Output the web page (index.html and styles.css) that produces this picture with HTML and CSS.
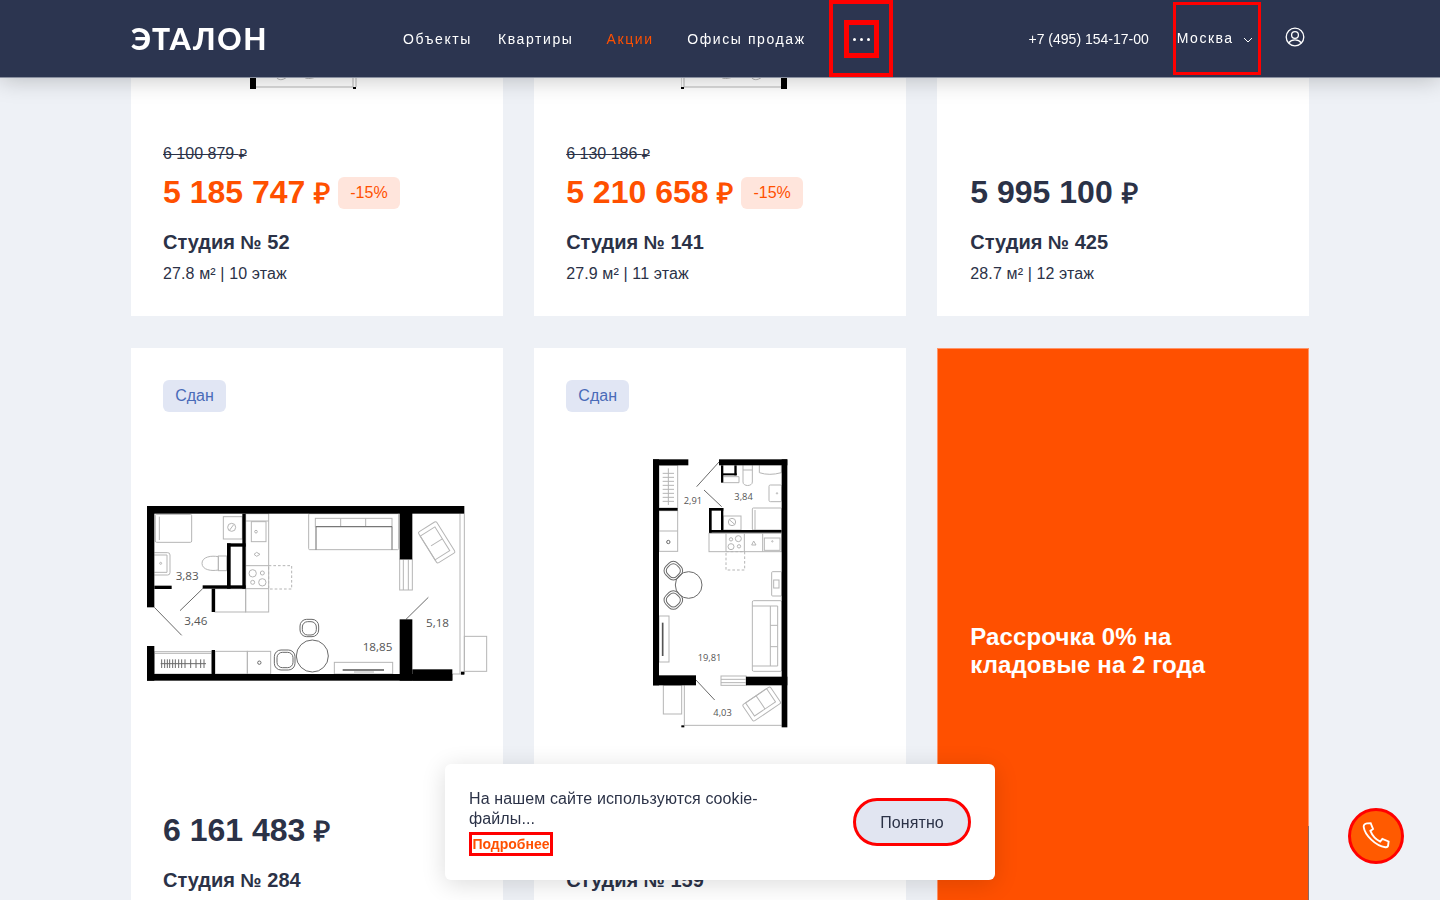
FILE: index.html
```html
<!DOCTYPE html>
<html lang="ru">
<head>
<meta charset="utf-8">
<title>Эталон</title>
<link rel="stylesheet" href="styles.css">
</head>
<body>
<header class="header">
  <div class="logo">ЭТАЛОН</div>
  <nav class="nav">
    <a class="nav-link">Объекты</a>
    <a class="nav-link">Квартиры</a>
    <a class="nav-link nav-accent">Акции</a>
    <a class="nav-link">Офисы продаж</a>
    <div class="more-outer"><div class="more-inner"><span class="dot"></span><span class="dot"></span><span class="dot"></span></div></div>
  </nav>
  <div class="header-right">
    <span class="phone">+7 (495) 154-17-00</span>
    <div class="city"><span class="city-name">Москва</span>
      <svg class="chev" viewBox="0 0 10 6"><path d="M1 1l4 4 4-4"/></svg>
    </div>
    <svg class="user" viewBox="0 0 20 20"><circle cx="10" cy="10" r="8.8"/><circle cx="10" cy="8" r="3.4"/><path d="M3.800 15.800c1.600-2.200 3.800-2.900 6.200-2.900s4.600.7 6.200 2.900"/></svg>
  </div>
</header>

<main class="grid">
  <article class="card card-top">
    <svg class="stub stub-a" viewBox="0 0 107 12">
      <rect class="w" x="0" y="0" width="6" height="12"/>
      <path class="f" d="M6 10h97M103 0v10M106 0v10"/>
      <path class="f" d="M26 0c2 3 6 4 11 0M54 0c2 2 6 2 12 0"/>
      <rect class="w" x="103" y="10" width="3" height="2"/>
    </svg>
    <div class="info">
      <div class="old">6 100 879 <span class="rub-old">₽</span></div>
      <div class="price-row"><span class="price price-sale">5 185 747 <span class="rub">₽</span></span><span class="badge">-15%</span></div>
      <h3 class="title">Студия <span class="num">№</span> 52</h3>
      <p class="meta">27.8 м² | 10 этаж</p>
    </div>
  </article>

  <article class="card card-top">
    <svg class="stub stub-b" viewBox="0 0 107 12">
      <rect class="w" x="100" y="0" width="6" height="12"/>
      <path class="f" d="M3 10h97M3 0v10M0 0v10"/>
      <path class="f" d="M70 0c2 3 6 4 11 0M40 0c2 2 6 2 12 0"/>
      <rect class="w" x="0" y="10" width="3" height="2"/>
    </svg>
    <div class="info">
      <div class="old">6 130 186 <span class="rub-old">₽</span></div>
      <div class="price-row"><span class="price price-sale">5 210 658 <span class="rub">₽</span></span><span class="badge">-15%</span></div>
      <h3 class="title">Студия <span class="num">№</span> 141</h3>
      <p class="meta">27.9 м² | 11 этаж</p>
    </div>
  </article>

  <article class="card card-top card-end">
    <div class="info">
      <div class="price-row"><span class="price">5 995 100 <span class="rub">₽</span></span></div>
      <h3 class="title">Студия <span class="num">№</span> 425</h3>
      <p class="meta">28.7 м² | 12 этаж</p>
    </div>
  </article>

  <article class="card card-bottom">
    <div class="tag">Сдан</div>
    <svg class="plan plan-a" viewBox="3 0 1110 630">
      <g class="f">
        <rect x="76" y="73" width="109" height="84" rx="4"/><path d="M88 80v70"/>
        <rect x="280" y="80" width="57" height="67"/><circle cx="305" cy="112" r="12"/><path d="M299 120l12-16"/>
        <path d="M73 188h40q7 0 7 7v53q0 7-7 7H73"/><path d="M73 195h38v52H73"/><circle cx="92" cy="220" r="3"/>
        <path d="M265 200c-20-4-49 0-49 20s29 24 49 20z"/><rect x="265" y="198" width="25" height="44"/>
        <rect x="347" y="71" width="69" height="295"/><path d="M347 93h69M347 227h69M347 296h69"/>
        <rect x="364" y="95" width="44" height="60"/><circle cx="378" cy="125" r="4"/><path d="M372 193l8-6 10 6-10 6z"/>
        <circle cx="368" cy="250" r="11"/><circle cx="397" cy="249" r="6"/><circle cx="368" cy="277" r="6"/><circle cx="397" cy="277" r="11"/>
        <rect class="dash" x="416" y="227" width="69" height="70"/>
        <rect x="255" y="296" width="92" height="70"/>
        <rect x="536" y="71" width="270" height="108" rx="3"/><rect x="556" y="85" width="230" height="25"/><path d="M632 85v25M707 85v25"/><path class="d" d="M558 110v69M786 110v69M558 110h228"/>
        <rect x="809" y="208" width="38" height="92"/><path d="M820 208v92M835 208v92"/>
        <g transform="translate(920 157) rotate(-32)"><rect x="-32" y="-55" width="64" height="110" rx="5"/><rect x="-32" y="-42" width="52" height="84"/><path d="M-20 0h40"/></g>
        <path d="M990 71v481M1003 71v481"/><rect x="1003" y="439" width="67" height="105"/><path d="M967 552h36"/>
        <circle class="d" cx="547" cy="498" r="48"/>
        <rect class="d" x="510" y="388" width="56" height="52" rx="20"/><rect class="d" x="517" y="395" width="42" height="40" rx="16"/>
        <rect class="d" x="433" y="480" width="62" height="60" rx="20"/><rect class="d" x="441" y="487" width="48" height="46" rx="16"/>
        <rect x="73" y="485" width="172" height="67"/><path d="M73 490h172"/>
        <path class="d" d="M92 521h136M95 508v26M104 508v26M112 508v26M119 508v26M128 508v26M136 508v26M146 508v26M155 508v26M165 508v26M182 508v26M198 508v26M212 508v26M222 508v26"/>
        <rect x="255" y="484" width="97" height="68"/><rect x="352" y="484" width="70" height="68"/><circle class="d" cx="388" cy="518" r="5"/>
        <rect x="613" y="517" width="175" height="35"/><path class="tv" d="M638 540h124"/><path d="M672 546h60"/>
        <path class="d" d="M73 352l82 84M218 296l-68 66M895 322l-67 66"/>
      </g>
      <rect class="w" x="51" y="48" width="952" height="23"/>
      <rect class="w" x="51" y="48" width="22" height="304"/>
      <rect class="w" x="51" y="468" width="22" height="104"/>
      <rect class="w" x="51" y="552" width="916" height="20"/>
      <rect class="w" x="809" y="48" width="38" height="160"/>
      <rect class="w" x="809" y="388" width="38" height="184"/>
      <rect class="w" x="847" y="538" width="120" height="34"/>
      <rect class="w" x="993" y="545" width="10" height="9"/>
      <rect class="w" x="337" y="71" width="10" height="225"/>
      <rect class="w" x="291" y="160" width="56" height="10"/>
      <rect class="w" x="291" y="160" width="11" height="136"/>
      <rect class="w" x="218" y="286" width="129" height="10"/>
      <rect class="w" x="73" y="287" width="52" height="10"/>
      <rect class="w" x="245" y="296" width="10" height="70"/>
      <rect class="w" x="245" y="480" width="10" height="72"/>
      <text class="t" x="137" y="271">3,83</text>
      <text class="t" x="163" y="405">3,46</text>
      <text class="t" x="698" y="484">18,85</text>
      <text class="t" x="888" y="410">5,18</text>
    </svg>
    <div class="info">
      <div class="price-row"><span class="price">6 161 483 <span class="rub">₽</span></span></div>
      <h3 class="title">Студия <span class="num">№</span> 284</h3>
      <p class="meta">27.8 м² | 8 этаж</p>
    </div>
  </article>

  <article class="card card-bottom">
    <div class="tag">Сдан</div>
    <svg class="plan plan-b" viewBox="0 0 480 870">
      <g class="f">
        <rect x="57" y="46" width="56" height="128"/><path d="M85 55v110M68 70h34M68 82h34M68 94h34M68 106h34M68 118h34M68 130h34M68 142h34M68 154h34"/>
        <rect x="57" y="182" width="56" height="122"/><path d="M57 243h56"/><circle class="d" cx="85" cy="276" r="5"/>
        <path d="M309 46v50c0 14 28 14 28 0V46M309 60h28"/>
        <path d="M358 46v22q30 10 66 0V46"/>
        <rect x="387" y="105" width="38" height="50" rx="4"/><circle cx="411" cy="130" r="2"/>
        <rect x="337" y="174" width="88" height="66" rx="3"/><path d="M345 180v60"/>
        <rect x="250" y="198" width="53" height="42"/><circle cx="276" cy="216" r="11"/><path d="M268 209l16 14"/>
        <path d="M250 80h47v18h-47"/>
        <rect x="207" y="250" width="218" height="55"/><path d="M258 250v55M313 250v55M368 250v55"/>
        <rect x="373" y="264" width="47" height="37"/><circle cx="397" cy="274" r="2"/>
        <circle cx="273" cy="268" r="5"/><circle cx="295" cy="266" r="9"/><circle cx="273" cy="290" r="9"/><circle cx="297" cy="289" r="5"/>
        <path d="M335 285l6-12 7 12z"/>
        <rect class="dash" x="258" y="305" width="56" height="55"/>
        <circle class="d" cx="146" cy="405" r="40"/>
        <g transform="translate(100 362) rotate(45)"><rect class="d" x="-25" y="-25" width="50" height="50" rx="18"/><rect class="d" x="-19" y="-19" width="38" height="38" rx="14"/></g>
        <g transform="translate(100 450) rotate(45)"><rect class="d" x="-25" y="-25" width="50" height="50" rx="18"/><rect class="d" x="-19" y="-19" width="38" height="38" rx="14"/></g>
        <rect x="57" y="498" width="30" height="138"/><path class="tv" d="M68 518v100"/>
        <rect x="395" y="365" width="30" height="73" rx="3"/><rect x="401" y="390" width="16" height="24"/>
        <rect x="337" y="452" width="88" height="212" rx="4"/><path d="M337 468h76M413 468v180M337 648h76M391 468v180M391 526h22M391 590h22"/>
        <rect x="243" y="678" width="75" height="28"/><path d="M243 688h75M243 698h75"/>
        <rect x="70" y="706" width="55" height="86"/>
        <path d="M133 706v120M133 826h292"/>
        <g transform="translate(365 762) rotate(-34)"><rect x="-50" y="-30" width="100" height="60" rx="5"/><rect x="-38" y="-30" width="76" height="48"/><path d="M0 -30v48"/></g>
        <path class="d" d="M237 36l-67 74M192 120l53 50M168 690l56 60"/>
      </g>
      <rect class="w" x="39" y="28" width="106" height="18"/>
      <rect class="w" x="237" y="28" width="205" height="18"/>
      <rect class="w" x="39" y="28" width="18" height="678"/>
      <rect class="w" x="425" y="28" width="17" height="804"/>
      <rect class="w" x="39" y="676" width="129" height="30"/>
      <rect class="w" x="318" y="680" width="124" height="26"/>
      <rect class="w" x="57" y="174" width="56" height="8"/>
      <rect class="w" x="243" y="46" width="7" height="52"/>
      <rect class="w" x="283" y="46" width="7" height="30"/>
      <rect class="w" x="243" y="70" width="47" height="6"/>
      <rect class="w" x="207" y="174" width="8" height="74"/>
      <rect class="w" x="207" y="174" width="43" height="8"/>
      <rect class="w" x="243" y="174" width="7" height="70"/>
      <rect class="w" x="207" y="240" width="218" height="8"/>
      <rect class="w" x="124" y="826" width="9" height="6"/>
      <text class="t t-b" x="131" y="163">2,91</text>
      <text class="t t-b" x="283" y="151">3,84</text>
      <text class="t t-b" x="173" y="633">19,81</text>
      <text class="t t-b" x="220" y="797">4,03</text>
    </svg>
    <div class="info">
      <div class="price-row"><span class="price">6 204 500 <span class="rub">₽</span></span></div>
      <h3 class="title">Студия <span class="num">№</span> 159</h3>
      <p class="meta">27.6 м² | 9 этаж</p>
    </div>
  </article>

  <article class="card card-bottom card-promo">
    <p class="promo-text">Рассрочка 0% на кладовые на 2 года</p>
  </article>
</main>

<aside class="cookie">
  <div class="cookie-text">
    <p class="cookie-msg">На нашем сайте используются cookie-файлы...</p>
    <a class="cookie-link">Подробнее</a>
  </div>
  <button class="cookie-btn">Понятно</button>
</aside>

<button class="call">
  <svg viewBox="0 0 30 30"><path d="M5.500 1.500l3.800-.3 2.500 6.300-2.800 2c1.800 4.500 6 9.300 10.500 11.500l2.300-2.800 6.700 2.700-.5 4.100c-.2 1.400-1.500 2.200-3 2C14.500 25.800 3 14 1.800 5.300c-.1-1.900 1.700-3.500 3.700-3.800z"/></svg>
</button>
</body>
</html>
```
FILE: styles.css
```css
* { box-sizing: border-box; }
html, body { margin: 0; height: 900px; overflow: hidden; }
body { background: #eef1f6; font-family: "Liberation Sans", Arial, sans-serif; color: #2b3247; }

.header {
  position: fixed; top: 0; left: 0; right: 0; height: 77px; z-index: 5;
  display: flex; align-items: center; padding-left: 131px;
  background: #2c3550; color: #fff;
  box-shadow: 0 1px 0 #8a90a0, 0 3px 22px rgba(0, 0, 0, .22);
}
.logo { width: 136px; font-family: Lato, sans-serif; font-size: 30px; font-weight: 900; line-height: 1; letter-spacing: 1.7px; white-space: nowrap; margin-top: -1px; }
.nav { display: flex; align-items: center; margin-left: 136px; height: 77px; font-size: 14px; letter-spacing: 1.6px; }
.nav-link { margin-right: 26px; white-space: nowrap; }
.nav-accent { margin-left: 7px; margin-right: 33.5px; color: #ff5000; }
.more-outer { width: 64px; height: 77px; border: 4px solid #f00; display: flex; align-items: center; justify-content: center; margin-left: -3.2px; }
.more-inner { width: 35px; height: 38px; border: 5px solid #f00; display: flex; align-items: center; justify-content: center; gap: 4px; margin: 1px 0 0 1px; }
.dot { width: 3px; height: 3px; border-radius: 50%; background: #fff; }
.header-right { display: flex; align-items: center; margin-left: 136px; }
.phone { font-size: 14px; }
.city { width: 88px; height: 73px; margin-left: 24px; border: 3px solid #f00; display: flex; align-items: center; padding-left: 1px; font-size: 14px; letter-spacing: 1.5px; }
.city-name { margin-top: -2px; }
.chev { width: 10px; height: 6px; margin-left: 9px; margin-top: 3px; fill: none; stroke: #fff; stroke-width: 1; }
.user { width: 20px; height: 20px; margin-left: 24px; margin-top: -3px; fill: none; stroke: #fff; stroke-width: 1.3; }

.grid { display: grid; grid-template-columns: repeat(3, 1fr); grid-template-rows: 316px 606px; column-gap: 31.5px; row-gap: 32px; width: 1178px; margin-left: 131px; }
.card { background: #fff; display: flex; flex-direction: column; overflow: hidden; }
.info { margin-top: auto; padding: 0 32px 30px; }
.card-end .info { padding-left: 33px; }

.stub { display: block; width: 107px; height: 12px; margin-top: 77px; }
.stub-a { margin-left: 119px; }
.stub-b { margin-left: 147px; }

.old { font-size: 16px; line-height: 20px; text-decoration: line-through; margin-bottom: 13px; }
.rub-old { font-size: 14px; }
.price-row { display: flex; align-items: center; gap: 8px; height: 32px; }
.price { font-size: 32px; font-weight: 700; line-height: 32px; white-space: nowrap; }
.rub { font-size: 28px; }
.price-sale { color: #ff5000; }
.badge { height: 32px; line-height: 32px; margin-top: -1px; padding: 0 12px; border-radius: 6px; background: #ffe5dc; color: #ff5000; font-size: 16px; }
.title { margin: 19px 0 0; font-size: 20px; line-height: 28px; font-weight: 700; }
.num { font-size: 19px; }
.meta { margin: 5px 0 0; font-size: 16px; line-height: 24px; letter-spacing: .12px; }

.tag { width: 63px; height: 32px; margin: 32px 0 0 32px; border-radius: 6px; background: #e1e6f4; color: #4a6bb8; font-size: 16px; line-height: 32px; text-align: center; flex: none; }
.plan { display: block; flex: none; }
.plan-a { width: 370px; height: 210px; margin-top: 78px; }
.plan-b { width: 160px; height: 290px; margin-top: 38px; margin-left: 106px; }

.w { fill: #000; }
.f { fill: none; stroke: #b5b5b5; stroke-width: 3; }
.stub .f { stroke-width: 1; }
.f .d { stroke: #6a6a6a; }
.f .tv { stroke: #555; stroke-width: 5; }
.f .dash { stroke-dasharray: 8 6; }
.t { font-family: "Open Sans", sans-serif; font-size: 35px; fill: #555; }
.t-b { font-size: 28px; }

.card-promo {
  justify-content: center; padding: 0 32px 2px;
  border-left: 1px solid #ff9468; border-top: 1px solid #ff9468;
  background: linear-gradient(#8a6a66, #8a6a66) right bottom / 1px 128px no-repeat, linear-gradient(#ff9468, #ff9468) right top / 1px 478px no-repeat, #ff5000;
}
.promo-text { margin: 0; color: #fff; font-size: 24px; line-height: 28px; font-weight: 700; width: 260px; letter-spacing: .1px; }

.cookie {
  position: fixed; left: 445px; bottom: 20px; width: 550px; height: 116px; z-index: 6;
  display: flex; align-items: center; justify-content: space-between;
  padding: 0 24px; border-radius: 6px; background: #fff;
  box-shadow: 0 4px 24px rgba(0, 0, 0, .14);
}
.cookie-text { width: 300px; margin-top: 1px; }
.cookie-msg { margin: 0 0 3px; font-size: 16px; line-height: 20px; letter-spacing: .12px; }
.cookie-link { display: block; border: 3px solid #f00; height: 24px; width: 84px; text-align: center; color: #ff5000; font-size: 14px; line-height: 18px; font-weight: 700; }
.cookie-btn { width: 118px; height: 48px; padding: 1px 0 0; border: 3px solid #f00; border-radius: 24px; background: #e1e5f1; color: #2b3247; font: 16px "Liberation Sans", Arial, sans-serif; letter-spacing: .1px; }

.call {
  position: fixed; left: 1348px; top: 808px; width: 56px; height: 56px; z-index: 6; padding: 0;
  display: flex; align-items: center; justify-content: center;
  border: 3px solid #f00; border-radius: 50%; background: #ff5a00;
}
.call svg { width: 28px; height: 28px; fill: none; stroke: #fff; stroke-width: 2; }
```
